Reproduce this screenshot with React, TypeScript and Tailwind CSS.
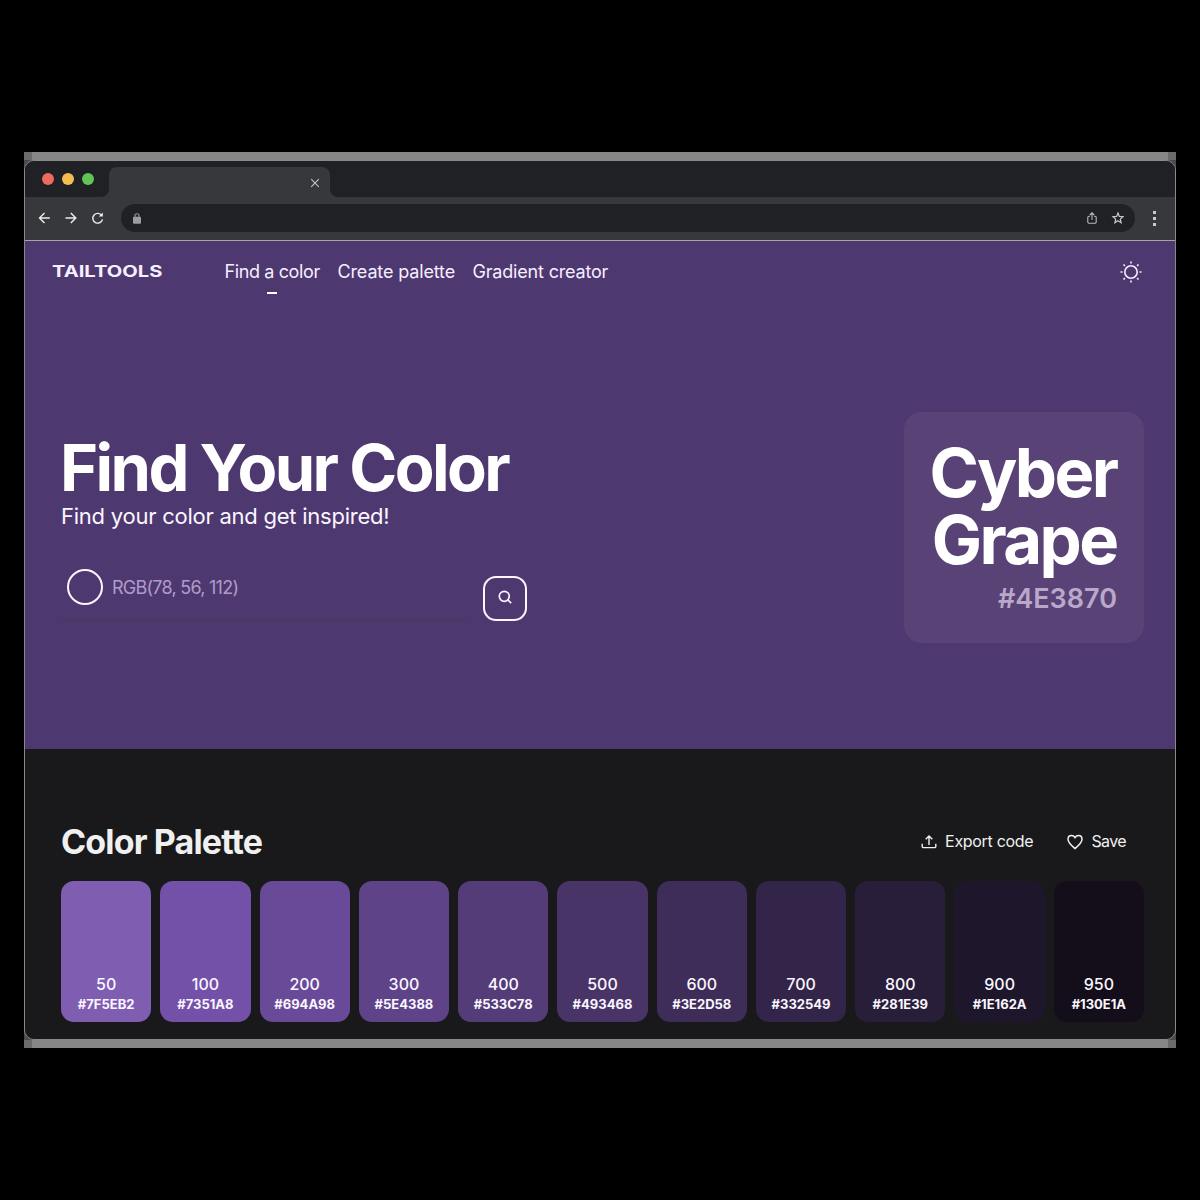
import React from "react";

const shades = [
  { name: "50", hex: "#7F5EB2" },
  { name: "100", hex: "#7351A8" },
  { name: "200", hex: "#694A98" },
  { name: "300", hex: "#5E4388" },
  { name: "400", hex: "#533C78" },
  { name: "500", hex: "#493468" },
  { name: "600", hex: "#3E2D58" },
  { name: "700", hex: "#332549" },
  { name: "800", hex: "#281E39" },
  { name: "900", hex: "#1E162A" },
  { name: "950", hex: "#130E1A" },
];

function TitleBar() {
  return (
    <div className="flex h-[36px] shrink-0 bg-[#37383b]">
      <div className="flex w-[84px] items-center gap-[8px] rounded-br-[8px] bg-[#202124] pb-px pl-[17px]">
        <span className="size-[12px] rounded-full bg-[#ed6a5f]" />
        <span className="size-[12px] rounded-full bg-[#f5bd4f]" />
        <span className="size-[12px] rounded-full bg-[#61c454]" />
      </div>
      <div className="w-[221px] bg-[#202124]">
        <div className="mt-[6px] flex h-[30px] items-center justify-end rounded-t-[8px] bg-[#37383b] pr-[10px]">
          <svg className="mt-[2px] size-[10px]" viewBox="0 0 10 10" fill="none" stroke="#c4c5c8" strokeWidth="1.1">
            <path d="M1.2 1.2 8.8 8.8M8.8 1.2 1.2 8.8" />
          </svg>
        </div>
      </div>
      <div className="flex-1 rounded-bl-[8px] bg-[#202124]" />
    </div>
  );
}

function AddressBar() {
  return (
    <div className="flex h-[43px] shrink-0 items-center bg-[#37383b] pl-[12px]">
      <svg className="mb-px h-[14px] w-[68px]" viewBox="0 0 68 14" fill="none" stroke="#eceded" strokeWidth="1.4">
        <path d="M12.8 7H2.5M7.5 2 2.5 7l5 5" />
        <path d="M28.500 7h10.300M33.800 2l5 5-5 5" />
        <path d="M64.800 4.500A4.900 4.900 0 1 0 65.500 8.400" />
        <path d="M65.800 1.600v4h-4z" fill="#eceded" stroke="none" />
      </svg>
      <div className="mb-px ml-[16px] flex h-[28px] w-[1014px] items-center rounded-full bg-[#202124] pl-[12px] pr-[10px]">
        <svg className="h-[11px] w-[8px]" viewBox="0 0 8 11">
          <rect x="0" y="3.8" width="8" height="7" rx="1" fill="#9b9ca0" />
          <path d="M2 4.5V2.8a2 2 0 0 1 4 0v1.7" fill="none" stroke="#9b9ca0" strokeWidth="1.1" />
        </svg>
        <svg className="ml-auto h-[14px] w-[12px]" viewBox="0 0 12 14" fill="none" stroke="#b9babd" strokeWidth="1.1">
          <path d="M4 5.2H3a1.2 1.2 0 0 0-1.2 1.2V11A1.2 1.2 0 0 0 3 12.2h6A1.2 1.2 0 0 0 10.2 11V6.4A1.2 1.2 0 0 0 9 5.2H8M6 9V1.8M3.8 4 6 1.8 8.2 4" />
        </svg>
        <svg className="ml-[13px] size-[14px]" viewBox="0 0 14 14" fill="none" stroke="#c9cacc" strokeWidth="1.2">
          <path d="m7 2 1.4 3.400 3.600.3-2.700 2.400.8 3.600L7 9.800l-3.100 1.900.8-3.600L2 5.700l3.600-.3z" />
        </svg>
      </div>
      <div className="ml-[18px] flex flex-col gap-[3px]">
        <span className="size-[3px] bg-[#c9cacc]" />
        <span className="size-[3px] bg-[#c9cacc]" />
        <span className="size-[3px] bg-[#c9cacc]" />
      </div>
    </div>
  );
}

function Nav() {
  return (
    <nav className="flex h-[62px] items-center whitespace-nowrap pl-[27px] pr-[33px] text-[18px] leading-[24px] text-[#f6efff]">
      <span className="w-[172.5px]">
        <span className="mb-[2px] inline-block origin-left scale-x-[1.3] text-[15.5px] font-bold leading-[22px]">TAILTOOLS</span>
      </span>
      <span className="relative w-[113px] tracking-[-0.38px]">
        Find a color
        <span className="absolute left-[42px] top-[32px] h-[2px] w-[10px] bg-white" />
      </span>
      <span className="w-[135px] tracking-[-0.14px]">Create palette</span>
      <span className="tracking-[-0.18px]">Gradient creator</span>
      <svg className="ml-auto size-[22px]" viewBox="0 0 22 22" fill="none" stroke="#f6efff" strokeWidth="1.6">
        <circle cx="11" cy="11" r="6.2" />
        <path d="M11 .5v2M11 19.5v2M.5 11h2M19.5 11h2M3.5 3.5l1.4 1.4M17.1 17.1l1.4 1.4M3.5 18.5l1.400-1.400M17.100 4.900l1.400-1.400" />
      </svg>
    </nav>
  );
}

function Hero() {
  return (
    <section className="h-[508px] shrink-0 bg-[#4e3870]">
      <Nav />
      <div className="flex items-start justify-between pl-[36px] pr-[31px] pt-[109px]">
        <div className="pt-[24px]">
          <h1 className="-ml-px whitespace-nowrap text-[65px] font-bold leading-[64px] tracking-[-2.6px] text-white">Find Your Color</h1>
          <p className="whitespace-nowrap text-[22px] leading-[32px] tracking-[-0.24px] text-[#fbf6ff]">Find your color and get inspired!</p>
          <div className="mt-[37px] flex">
            <div className="mr-[15px] flex h-[52px] w-[407px] items-start border-b-2 border-[#4b3b58] pl-[6px]">
              <span className="size-[36px] rounded-full border-2 border-[#fbf6ff]" />
              <span className="ml-[9px] whitespace-nowrap text-[18px] leading-[37px] tracking-[-0.75px] text-[#b09cc9]">RGB(78, 56, 112)</span>
            </div>
            <button className="mt-[7px] flex h-[45px] w-[44px] items-center justify-center rounded-[13px] border-2 border-[#fbf6ff]">
              <svg className="mb-[3px] mr-px size-[14px]" viewBox="0 0 14 14" fill="none" stroke="#fbf6ff" strokeWidth="1.7">
                <circle cx="6.3" cy="6.3" r="5" />
                <path d="m10 10 3.2 3.2" />
              </svg>
            </button>
          </div>
        </div>
        <div className="flex h-[231px] w-[240px] flex-col items-end rounded-[18px] bg-[#594376] pr-[27px] pt-[27px] text-right">
          <h2 className="mr-[0.5px] text-[67px] font-bold leading-[67px] tracking-[-2.6px] text-white">
            Cyber
            <br />
            Grape
          </h2>
          <p className="mt-[9px] text-[27px] font-semibold leading-[34px] text-[#b9a8ca]">#4E3870</p>
        </div>
      </div>
    </section>
  );
}

function Palette() {
  return (
    <section className="flex-1 bg-[#19191b] pl-[36px] pr-[31px] pt-[74px]">
      <div className="flex h-[38px] items-center whitespace-nowrap pr-[18px] text-[#f0f0f0]">
        <h2 className="text-[34px] font-bold leading-[38px] tracking-[-0.86px]">Color Palette</h2>
        <svg className="mb-px ml-auto mr-[8px] size-[16px]" viewBox="0 0 16 16" fill="none" stroke="#f0f0f0" strokeWidth="1.4">
          <path d="M1.2 9.8v2.600a1.200 1.200 0 0 0 1.200 1.200h11.200a1.200 1.200 0 0 0 1.200-1.200V9.800M8 11V2M4.700 5.200 8 1.900l3.300 3.300" />
        </svg>
        <span className="mb-[2px] mr-[34px] text-[16px] leading-[20px] tracking-[-0.3px]">Export code</span>
        <svg className="mb-px mr-[8px] size-[16px]" viewBox="0 0 16 16" fill="none" stroke="#f0f0f0" strokeWidth="1.5">
          <path d="M8 14.6C4 11.3 1 8.8 1 5.3 1 3.2 2.6 1.6 4.6 1.6 6 1.6 7.3 2.4 8 3.6 8.7 2.4 10 1.6 11.4 1.6 13.4 1.6 15 3.2 15 5.3 15 8.8 12 11.3 8 14.6z" />
        </svg>
        <span className="mb-[2px] text-[16px] leading-[20px] tracking-[-0.6px]">Save</span>
      </div>
      <div className="mt-[20px] grid grid-cols-11 gap-[9px]">
        {shades.map((s) => (
          <div
            key={s.hex}
            className="flex h-[141px] flex-col items-center justify-end rounded-[13px] pb-[8px] text-[#fbf6ff]"
            style={{ backgroundColor: s.hex }}
          >
            <span className="text-[16px] font-medium leading-[20px]">{s.name}</span>
            <span className="text-[13px] font-bold leading-[20px]">{s.hex}</span>
          </div>
        ))}
      </div>
    </section>
  );
}

function EdgeStrip() {
  return (
    <div className="flex h-[8px] justify-between bg-[#868686]">
      <span className="w-[8px] bg-[#6b6b6b]" />
      <span className="w-[8px] bg-[#6b6b6b]" />
    </div>
  );
}

export default function App() {
  return (
    <main className="flex h-[1200px] w-[1200px] flex-col bg-black px-[24px] py-[152px] font-['Inter',sans-serif]">
      <EdgeStrip />
      <div className="bg-[#4a4a4a]">
        <div className="flex h-[880px] flex-col overflow-hidden rounded-[10px] border border-[#8b8888]">
          <TitleBar />
          <AddressBar />
          <div className="h-px shrink-0 bg-[#aaa0a5]" />
          <Hero />
          <Palette />
        </div>
      </div>
      <EdgeStrip />
    </main>
  );
}
